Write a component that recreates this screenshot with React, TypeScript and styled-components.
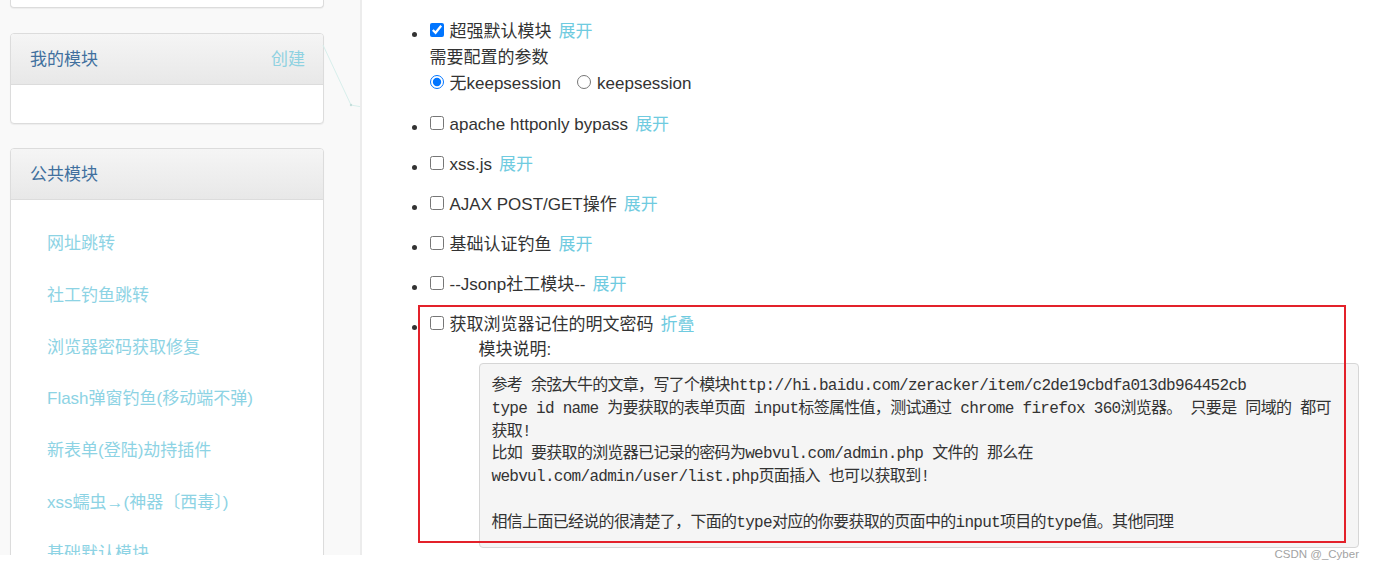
import React from "react";
import styled, { createGlobalStyle } from "styled-components";

const GlobalStyle = createGlobalStyle`
  html, body { margin: 0; padding: 0; background: #fff; }
  body {
    font-family: "Liberation Sans", "Noto Sans CJK SC", sans-serif;
    color: #333;
  }
  * { box-sizing: border-box; }
`;

const Root = styled.div`
  position: relative;
  width: 1375px;
  height: 571px;
  background: #fff;
  overflow: hidden;
`;

const Main = styled.div`
  display: flex;
  height: 555px;
  overflow: hidden;
`;

const Sidebar = styled.aside`
  position: relative;
  flex: 0 0 362px;
  background: #f9f9f9;
  border-right: 2px solid #ececec;
  padding-left: 10px;
  display: flex;
  flex-direction: column;
  overflow: hidden;
`;

const PanelStub = styled.div`
  flex-shrink: 0;
  width: 314px;
  height: 8px;
  background: #fff;
  border: 1px solid #dcdcdc;
  border-top: none;
  border-radius: 0 0 4px 4px;
  box-shadow: 0 1px 1px rgba(0, 0, 0, 0.05);
`;

const Panel = styled.section<{ $gap: number }>`
  width: 314px;
  margin-top: ${(p) => p.$gap}px;
  background: #fff;
  border: 1px solid #dcdcdc;
  border-radius: 4px;
  box-shadow: 0 1px 1px rgba(0, 0, 0, 0.05);
  flex-shrink: 0;
`;

const PanelHeader = styled.div`
  height: 51px;
  display: flex;
  align-items: center;
  justify-content: space-between;
  padding: 0 18px 4px 19px;
  background: linear-gradient(to bottom, #f5f5f5 0%, #e8e8e8 100%);
  border-bottom: 1px solid #dcdcdc;
  border-radius: 3px 3px 0 0;
  font-size: 17px;
`;

const PanelTitle = styled.span`
  color: #41709e;
`;

const CreateLink = styled.span`
  color: #8fd2e1;
`;

const PanelBody = styled.div<{ $pad: number; $height?: number }>`
  padding-top: ${(p) => p.$pad}px;
  ${(p) => (p.$height ? `height: ${p.$height}px;` : "")}
`;

const SideItem = styled.div`
  height: 51.7px;
  display: flex;
  align-items: center;
  padding-left: 36px;
  font-size: 17px;
  color: #8dd3e4;
  white-space: nowrap;
`;

const NetLine = styled.svg`
  position: absolute;
  left: 320px;
  top: 42px;
  width: 42px;
  height: 70px;
  pointer-events: none;
`;

const Content = styled.main`
  position: relative;
  flex: 1;
  padding-top: 19px;
  background: #fff;
`;

const List = styled.ul`
  margin: 0;
  padding: 0 0 0 49px;
  list-style: none;
  font-size: 17px;
  color: #333;
`;

const Item = styled.li`
  display: flex;
  & + & {
    margin-top: 14px;
  }
  &:nth-child(2) {
    margin-top: 15px;
  }
`;

const Bullet = styled.span`
  flex: 0 0 5px;
  width: 5px;
  height: 5px;
  margin: 12.5px 12.5px 0 1px;
  border-radius: 50%;
  background: #333;
`;

const ItemBody = styled.div`
  display: flex;
  flex-direction: column;
`;

const Line = styled.div<{ $indent?: number; $h?: number }>`
  display: flex;
  align-items: center;
  height: ${(p) => p.$h || 26}px;
  line-height: 26px;
  white-space: nowrap;
  padding-left: ${(p) => p.$indent || 0}px;
`;

const Check = styled.input`
  width: 14px;
  height: 14px;
  margin: 0 6px 4px 0;
  flex-shrink: 0;
`;

const Radio = styled.input<{ $gap?: number }>`
  width: 14px;
  height: 14px;
  margin: 0 6px 4px ${(p) => p.$gap || 0}px;
  flex-shrink: 0;
`;

const Toggle = styled.span`
  margin-left: 7px;
  color: #6fcbe0;
`;

const Pre = styled.pre`
  margin: 0 0 0 49px;
  width: 880px;
  padding: 11px 12px 12px;
  background: #f5f5f5;
  border: 1px solid #d6d6d6;
  border-radius: 4px;
  font-family: "Liberation Mono", "Noto Sans CJK SC", monospace;
  font-size: 16px;
  letter-spacing: -0.7px;
  line-height: 22.8px;
  color: #333;
  white-space: pre;
  overflow: hidden;
`;

const Highlight = styled.div`
  position: absolute;
  left: 56px;
  top: 305px;
  width: 928px;
  height: 238px;
  border: 2px solid #e3212a;
  pointer-events: none;
`;

const Watermark = styled.div`
  position: absolute;
  right: 16px;
  top: 548px;
  font-family: "Liberation Sans", sans-serif;
  font-size: 11.5px;
  color: #a3a3a3;
`;

const sideItems = [
  "网址跳转",
  "社工钓鱼跳转",
  "浏览器密码获取修复",
  "Flash弹窗钓鱼(移动端不弹)",
  "新表单(登陆)劫持插件",
  "xss蠕虫→(神器〔西毒〕)",
  "基础默认模块",
];

const modules = [
  "apache httponly bypass",
  "xss.js",
  "AJAX POST/GET操作",
  "基础认证钓鱼",
  "--Jsonp社工模块--",
];

const preText = [
  "参考 余弦大牛的文章，写了个模块http://hi.baidu.com/zeracker/item/c2de19cbdfa013db964452cb",
  "type id name 为要获取的表单页面 input标签属性值，测试通过 chrome firefox 360浏览器。 只要是 同域的 都可",
  "获取!",
  "比如 要获取的浏览器已记录的密码为webvul.com/admin.php 文件的 那么在",
  "webvul.com/admin/user/list.php页面插入 也可以获取到!",
  "",
  "相信上面已经说的很清楚了，下面的type对应的你要获取的页面中的input项目的type值。其他同理",
].join("\n");

export default function App() {
  return (
    <>
      <GlobalStyle />
      <Root>
        <Main>
          <Sidebar>
            <PanelStub />
            <Panel $gap={25}>
              <PanelHeader>
                <PanelTitle>我的模块</PanelTitle>
                <CreateLink>创建</CreateLink>
              </PanelHeader>
              <PanelBody $pad={0} $height={38} />
            </Panel>
            <Panel $gap={24}>
              <PanelHeader>
                <PanelTitle>公共模块</PanelTitle>
              </PanelHeader>
              <PanelBody $pad={16}>
                {sideItems.map((s) => (
                  <SideItem key={s}>{s}</SideItem>
                ))}
              </PanelBody>
            </Panel>
            <NetLine viewBox="0 0 42 70">
              <polyline
                points="3,3 31,63 42,65"
                fill="none"
                stroke="#d8efec"
                strokeWidth="1"
              />
              <circle cx="31" cy="63" r="1.2" fill="#c4dedb" />
            </NetLine>
          </Sidebar>
          <Content>
            <List>
              <Item>
                <Bullet />
                <ItemBody>
                  <Line>
                    <Check type="checkbox" defaultChecked />
                    <span>超强默认模块</span>
                    <Toggle>展开</Toggle>
                  </Line>
                  <Line>需要配置的参数</Line>
                  <Line>
                    <Radio type="radio" name="ks" defaultChecked />
                    <span>无keepsession</span>
                    <Radio type="radio" name="ks" $gap={16} />
                    <span>keepsession</span>
                  </Line>
                </ItemBody>
              </Item>
              {modules.map((m) => (
                <Item key={m}>
                  <Bullet />
                  <ItemBody>
                    <Line>
                      <Check type="checkbox" />
                      <span>{m}</span>
                      <Toggle>展开</Toggle>
                    </Line>
                  </ItemBody>
                </Item>
              ))}
              <Item>
                <Bullet />
                <ItemBody>
                  <Line $h={25}>
                    <Check type="checkbox" />
                    <span>获取浏览器记住的明文密码</span>
                    <Toggle>折叠</Toggle>
                  </Line>
                  <Line $indent={49} $h={26}>模块说明:</Line>
                  <Pre>{preText}</Pre>
                </ItemBody>
              </Item>
            </List>
            <Highlight />
          </Content>
        </Main>
        <Watermark>CSDN @_Cyber</Watermark>
      </Root>
    </>
  );
}
